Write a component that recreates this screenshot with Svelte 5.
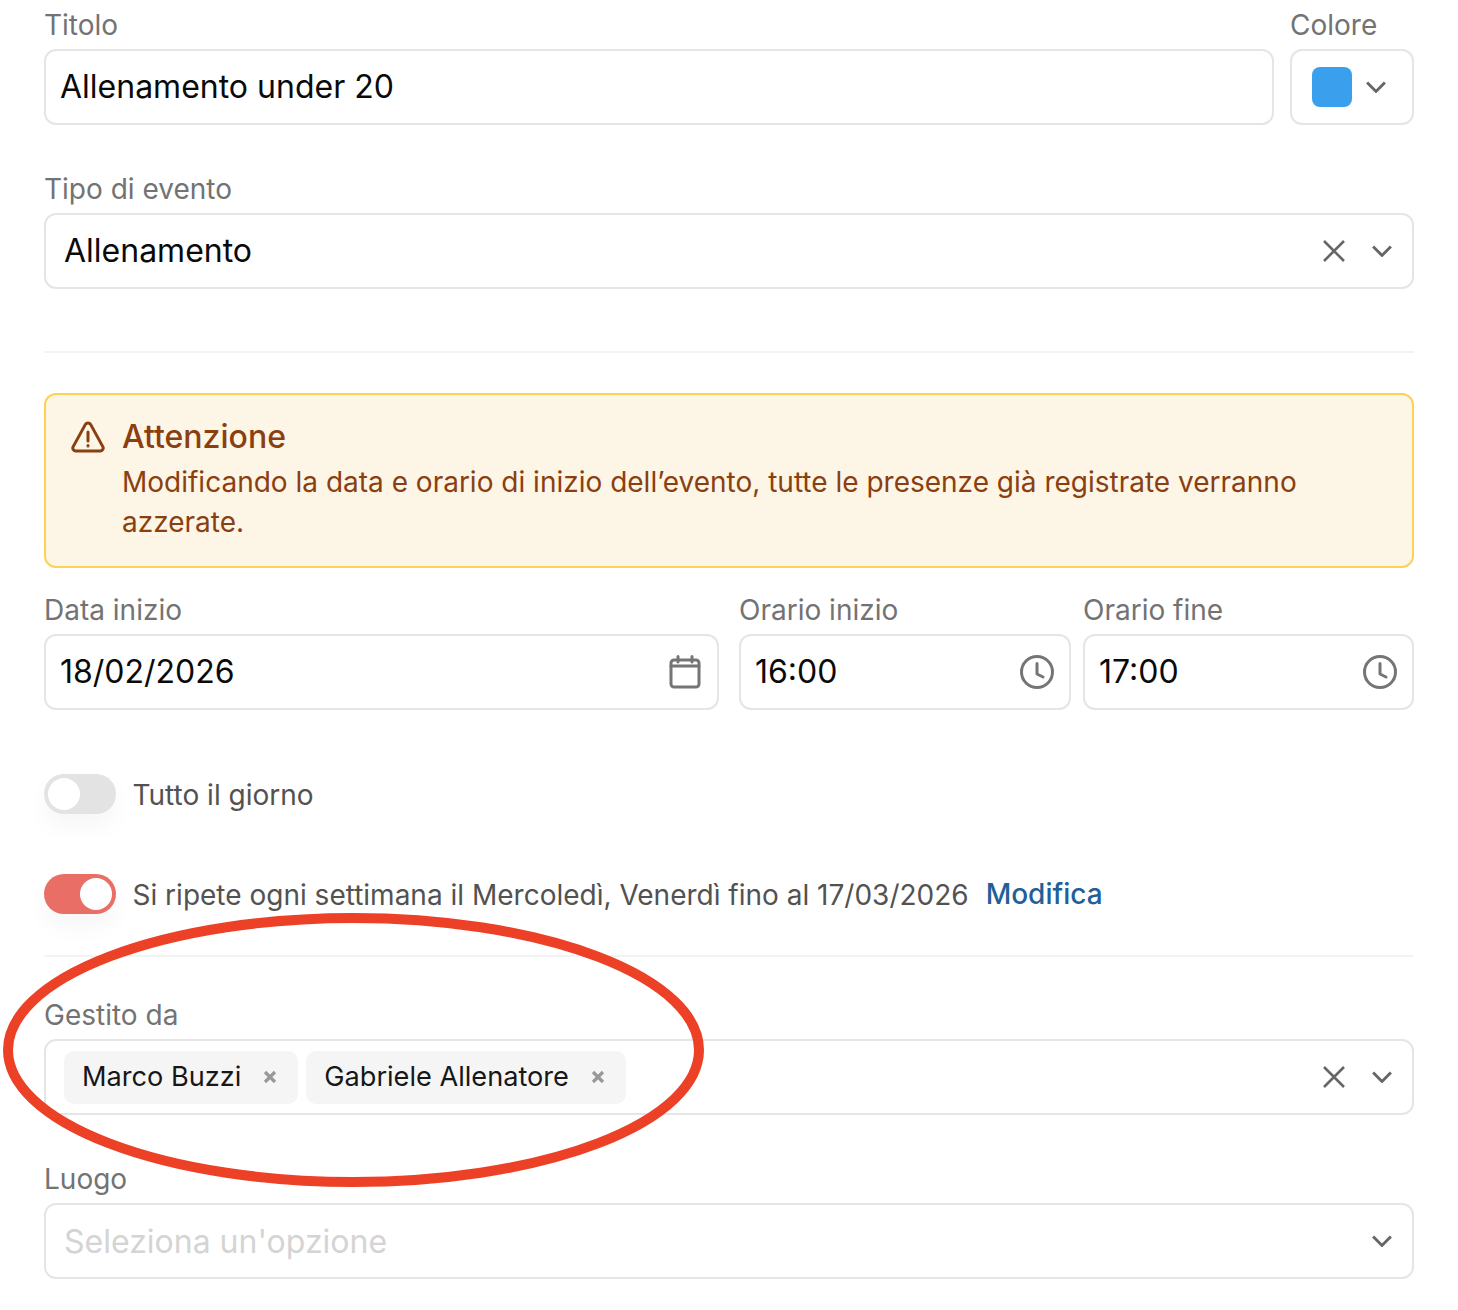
<script>
  const chevron = "M1 1l8 8 8-8";
  let people = ["Marco Buzzi", "Gabriele Allenatore"];
</script>

{#snippet chev(cls = "")}
  <svg class="chev {cls}" width="20" height="12" viewBox="0 0 18 10" fill="none"><path d={chevron} /></svg>
{/snippet}

{#snippet cross()}
  <svg class="cross" width="24" height="24" viewBox="0 0 24 24" fill="none"><path d="M2 2l20 20M22 2L2 22" /></svg>
{/snippet}

{#snippet clock()}
  <svg class="ico" width="34" height="34" viewBox="0 0 34 34" fill="none">
    <circle cx="17" cy="17" r="15.5" />
    <path d="M17 8.5V19l6 3" />
  </svg>
{/snippet}

<main>
  <div class="row title-row">
    <div class="field grow">
      <label for="titolo">Titolo</label>
      <div class="box" id="titolo"><span class="value title">Allenamento under 20</span></div>
    </div>
    <div class="field colour">
      <label for="colore">Colore</label>
      <div class="box colour-box" id="colore">
        <span class="swatch"></span>
        {@render chev()}
      </div>
    </div>
  </div>

  <div class="field type">
    <label for="tipo">Tipo di evento</label>
    <div class="box select" id="tipo">
      <span class="value">Allenamento</span>
      <span class="actions">{@render cross()}{@render chev()}</span>
    </div>
  </div>

  <hr class="rule-one" />

  <div class="alert">
    <svg class="warn" width="34" height="32" viewBox="0 0 34 32" fill="none">
      <path d="M14.4 3.4L2.2 25.6c-1.1 2 .3 4.4 2.6 4.4h24.4c2.3 0 3.7-2.4 2.6-4.4L19.6 3.4c-1.1-2-4.1-2-5.2 0z" />
      <path d="M17 11v9M17 24.4v.6" />
    </svg>
    <div>
      <h2>Attenzione</h2>
      <p>Modificando la data e orario di inizio dell’evento, tutte le presenze già registrate verranno azzerate.</p>
    </div>
  </div>

  <div class="row dates">
    <div class="field grow">
      <label for="data">Data inizio</label>
      <div class="box compact calendar" id="data">
        <span class="value">18/02/2026</span>
        <svg class="ico" width="32" height="34" viewBox="0 0 32 34" fill="none">
          <rect x="2" y="5" width="28" height="27" rx="3" />
          <path d="M2 11h28M9 1.5V7M23 1.5V7" />
        </svg>
      </div>
    </div>
    <div class="times">
      <div class="field time-a">
        <label for="inizio">Orario inizio</label>
        <div class="box compact" id="inizio"><span class="value">16:00</span>{@render clock()}</div>
      </div>
      <div class="field time-b">
        <label for="fine">Orario fine</label>
        <div class="box compact" id="fine"><span class="value">17:00</span>{@render clock()}</div>
      </div>
    </div>
  </div>

  <div class="toggle-row first">
    <span class="toggle"><span class="knob"></span></span>
    <span class="toggle-label">Tutto il giorno</span>
  </div>

  <div class="toggle-row second">
    <span class="toggle on"><span class="knob"></span></span>
    <span class="toggle-label">Si ripete ogni settimana il Mercoledì, Venerdì fino al 17/03/2026</span>
    <a href="#modifica">Modifica</a>
  </div>

  <hr class="rule-two" />

  <div class="field">
    <label for="gestito">Gestito da</label>
    <div class="box select tags-box" id="gestito">
      <div class="tags">
        {#each people as person}
          <span class="tag"><span class="tag-name">{person}</span>
            <svg width="14" height="14" viewBox="0 0 14 14" fill="none"><path d="M2 2l10 10M12 2L2 12" /></svg>
          </span>
        {/each}
      </div>
      <span class="actions">{@render cross()}{@render chev()}</span>
    </div>
  </div>

  <div class="field place">
    <label for="luogo">Luogo</label>
    <div class="box select" id="luogo">
      <span class="value placeholder">Seleziona un'opzione</span>
      <span class="actions">{@render chev()}</span>
    </div>
  </div>

  <svg class="mark" width="712" height="282" viewBox="0 0 712 282" fill="none">
    <ellipse cx="353.5" cy="141" rx="345.5" ry="132" />
  </svg>
</main>

<style>
  :global(body) {
    background: #fff;
  }

  main {
    position: relative;
    box-sizing: border-box;
    height: 1310px;
    padding: 8px 44px 0;
    font-family: Inter, "Noto Sans", sans-serif;
    overflow: hidden;
  }

  .row {
    display: flex;
  }

  .title-row {
    gap: 16px;
  }

  .grow {
    flex: 1;
  }

  .colour {
    width: 124px;
  }

  label {
    display: block;
    height: 34px;
    margin-bottom: 7px;
    font-size: 28px;
    line-height: 34px;
    color: #737373;
  }

  .box {
    box-sizing: border-box;
    height: 76px;
    display: flex;
    align-items: center;
    border: 2px solid #e5e5e5;
    border-radius: 12px;
    padding: 0 14px;
    background: #fff;
  }

  .value {
    margin-bottom: 2px;
    font-size: 32px;
    color: #0a0a0a;
  }

  .colour-box {
    padding-left: 20px;
    gap: 14px;
  }

  .swatch {
    width: 40px;
    height: 40px;
    border-radius: 8px;
    background: #3aa0ee;
  }

  .chev path {
    stroke: #666;
    stroke-width: 2.6;
  }

  .cross path {
    stroke: #666;
    stroke-width: 2.6;
  }

  .type {
    margin-top: 47px;
  }

  .select {
    justify-content: space-between;
    padding: 0 20px 0 18px;
  }

  .actions {
    display: flex;
    align-items: center;
    gap: 26px;
  }

  hr {
    border: 0;
    height: 2px;
    background: #f3f3f3;
    margin: 0;
  }

  .rule-one {
    margin: 62px 0 40px;
  }

  .alert {
    box-sizing: border-box;
    height: 175px;
    display: flex;
    gap: 17px;
    padding: 24px 25px;
    border: 2px solid #fbd157;
    border-radius: 12px;
    background: #fdf5e5;
    color: #8a3f10;
  }

  .warn {
    flex: none;
    margin-top: 2px;
  }

  .warn path {
    stroke: #8a3f10;
    stroke-width: 3;
    stroke-linecap: round;
    stroke-linejoin: round;
  }

  h2 {
    margin: 0;
    font-size: 32px;
    line-height: 36px;
    font-weight: 500;
  }

  p {
    margin: 7px 0 0;
    font-size: 28px;
    line-height: 40px;
  }

  .dates {
    margin-top: 25px;
    gap: 20px;
  }

  .times {
    display: flex;
    gap: 12px;
  }

  .time-a {
    width: 332px;
  }

  .time-b {
    width: 331px;
  }

  .compact {
    justify-content: space-between;
    padding: 0 15px 0 14px;
  }

  .calendar {
    padding-right: 16px;
  }

  .ico circle,
  .ico rect,
  .ico path {
    stroke: #757575;
    stroke-width: 3;
    stroke-linecap: round;
    stroke-linejoin: round;
  }

  .toggle-row {
    display: flex;
    align-items: center;
    height: 40px;
  }

  .first {
    margin-top: 64px;
  }

  .second {
    margin-top: 60px;
  }

  .toggle {
    position: relative;
    flex: none;
    width: 72px;
    height: 40px;
    border-radius: 20px;
    background: #e3e3e3;
    box-shadow: 0 12px 24px rgba(0, 0, 0, 0.04);
  }

  .toggle.on {
    background: #e96f66;
  }

  .knob {
    position: absolute;
    top: 4px;
    left: 4px;
    width: 32px;
    height: 32px;
    border-radius: 50%;
    background: #fff;
  }

  .on .knob {
    left: 36px;
  }

  .toggle-label {
    margin: 2px 0 0 16.5px;
    font-size: 28px;
    color: #525252;
  }

  a {
    margin: 0 0 0 17px;
    font-size: 28px;
    font-weight: 500;
    color: #1f6099;
    text-decoration: none;
  }

  .rule-two {
    margin: 41px 0 41px;
  }

  .tags-box {
    padding-left: 18px;
  }

  .tags {
    display: flex;
    gap: 8px;
  }

  .tag {
    display: flex;
    align-items: center;
    gap: 22px;
    height: 53px;
    padding: 0 21px 0 18px;
    border-radius: 10px;
    background: #f5f5f5;
    font-size: 27.15px;
    color: #171717;
  }

  .tag-name {
    margin-bottom: 2px;
  }

  .tag path {
    stroke: #999;
    stroke-width: 3.2;
  }

  .place {
    margin-top: 47px;
  }

  .placeholder {
    margin-bottom: 0;
    color: #d4d4d4;
  }

  .mark {
    position: absolute;
    left: 0;
    top: 909px;
    pointer-events: none;
  }

  .mark ellipse {
    stroke: #ec4126;
    stroke-width: 10;
  }
</style>
